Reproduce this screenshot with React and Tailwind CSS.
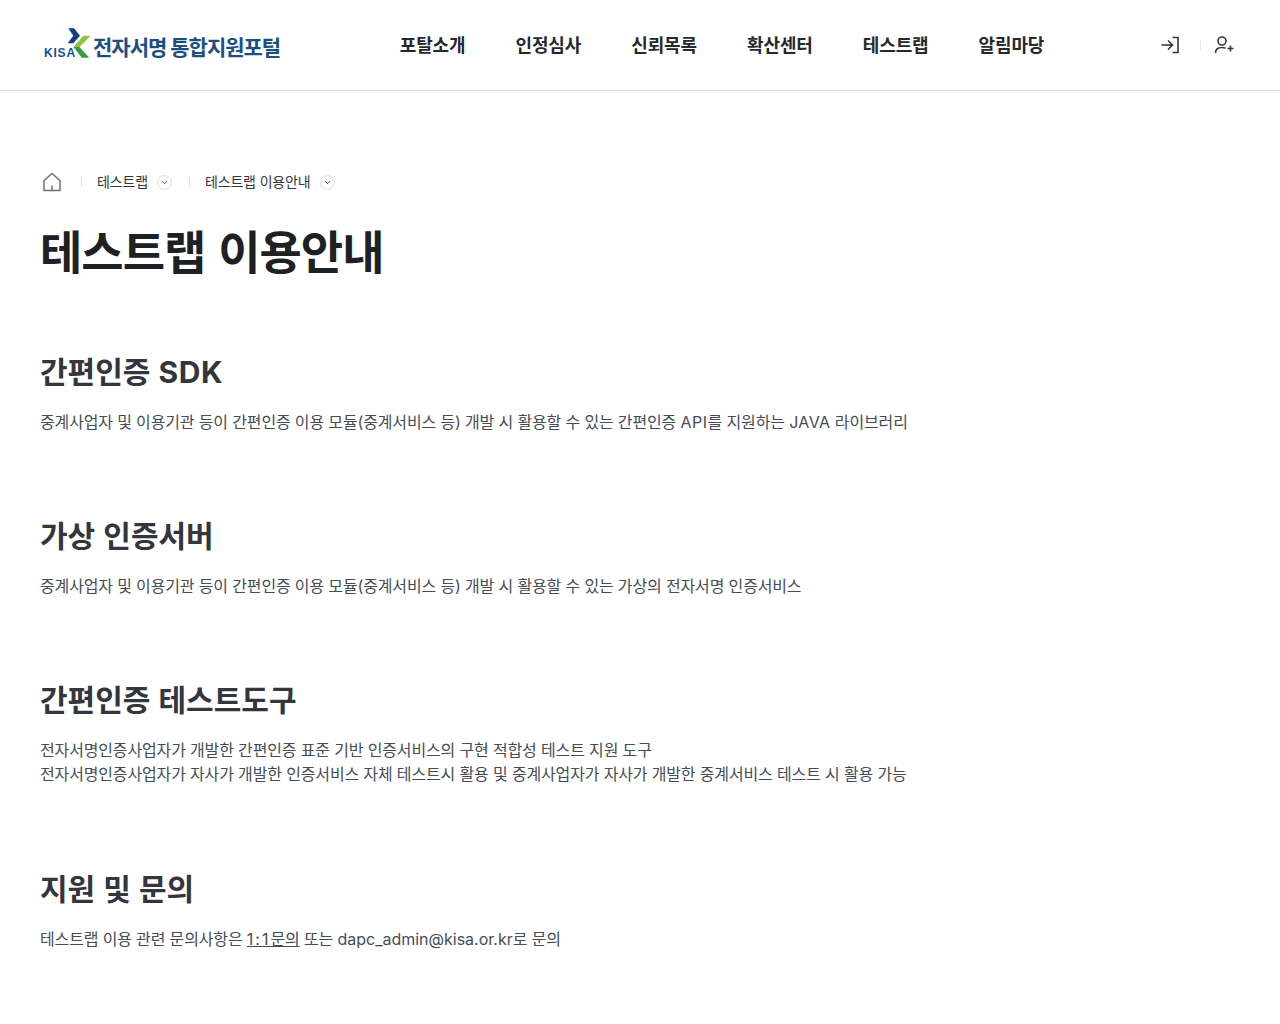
import React from 'react';
import { ChevronDown } from 'lucide-react';

const FONT = 'font-["Inter","Noto_Sans_CJK_KR",sans-serif]';

const MENUS = ['포탈소개', '인정심사', '신뢰목록', '확산센터', '테스트랩', '알림마당'];

function Logo() {
    return (
        <div className="flex items-center">
            <div className="relative h-[36px] w-[47px] shrink-0">
                <span className="absolute left-0 bottom-[6px] text-[12px] leading-none font-bold tracking-[0.8px] text-[#14508f] font-['Liberation_Sans',sans-serif]">KISA</span>
                <svg className="absolute left-[20px] top-[-1px]" width="28" height="32" viewBox="0 0 28 32">
                    <path d="M4.3 0.3 L10 0.3 L16 7.7 L9.3 15.3 L3.7 15.3 L9.3 7.7 Z" fill="#123f7f" />
                    <path d="M26.7 7.7 L19.3 7.7 L9.5 19 L15.5 19 Z" fill="#8cc63f" />
                    <path d="M9.5 19 L15.5 19 L25.3 29.7 L17.7 29.7 Z" fill="#3c9a43" />
                </svg>
            </div>
            <span className="ml-[2px] text-[21px] leading-none font-bold tracking-[-1px] text-[#1c4f80] whitespace-nowrap">전자서명 통합지원포털</span>
        </div>
    );
}

function Header() {
    return (
        <header className="flex h-[91px] items-center justify-between border-b border-[#dedfe2] pl-[44px] pr-[46px]">
            <div className="w-[238px] pt-[4px]"><Logo /></div>
            <nav className="flex gap-[50px] pt-[1px] pl-[2px]">
                {MENUS.map(m => (
                    <a key={m} className="text-[18px] leading-none font-bold tracking-[-0.12px] text-[#26282b] whitespace-nowrap">{m}</a>
                ))}
            </nav>
            <div className="flex items-center">
                <svg width="20" height="20" viewBox="0 0 20 20" fill="none" stroke="#33363d" strokeWidth="1.6">
                    <path d="M1.5 10 H12.5 M8 5.5 L12.5 10 L8 14.5" />
                    <path d="M12.5 2.5 H18 V17.5 H12.5" />
                </svg>
                <span className="ml-[20px] h-[10px] w-px bg-[#e6e7e9]" />
                <svg className="ml-[13px]" width="20" height="20" viewBox="0 0 20 20" fill="none" stroke="#33363d" strokeWidth="1.6">
                    <circle cx="8" cy="6" r="4" />
                    <path d="M1.5 18 C1.5 14 4 12.5 8 12.5 C9.5 12.5 10.5 12.7 11.5 13.2" />
                    <path d="M13.5 13.5 H19.5 M16.5 10.5 V16.5" />
                </svg>
            </div>
        </header>
    );
}

function Crumb({ children }) {
    return (
        <>
            <span className="ml-[17px] mr-[15px] h-[10px] w-px bg-[#dcdde0]" />
            <span className="text-[14px] leading-none tracking-[-0.15px] text-[#33363d] whitespace-nowrap">{children}</span>
            <span className="ml-[9px] flex h-[15px] w-[15px] items-center justify-center rounded-full border border-[#dcdde0]">
                <ChevronDown size={9} strokeWidth={2.5} color="#464c53" />
            </span>
        </>
    );
}

function Section({ title, className, children }) {
    return (
        <section className={className}>
            <h3 className="text-[30px] leading-[38px] font-bold [word-spacing:1px] text-[#33363d]">{title}</h3>
            <div className="mt-[19px] text-[16px] leading-[24px] tracking-[-0.15px] text-[#464c53]">{children}</div>
        </section>
    );
}

export default function App() {
    return (
        <div className={`min-h-[1024px] bg-white ${FONT}`}>
            <Header />
            <main className="px-[40px]">
                <div className="flex items-center pt-[81px] pl-[3px]">
                    <svg className="mr-[3px]" width="18" height="20" viewBox="0 0 18 20" fill="none" stroke="#6d7178" strokeWidth="1.5">
                        <path d="M1 8.5 L9 1.5 L17 8.5 V18.5 H1 Z" />
                        <path d="M9 13.5 V18.5" />
                    </svg>
                    <Crumb>테스트랩</Crumb>
                    <Crumb>테스트랩 이용안내</Crumb>
                </div>
                <h2 className="mt-[31px] text-[46px] leading-[58px] font-bold tracking-[-1px] [word-spacing:3px] text-[#1e2124]">테스트랩 이용안내</h2>
                <Section title={<>간편인증 <span className="tracking-[0.6px]">SDK</span></>} className="mt-[72px]">
                    중계사업자 및 이용기관 등이 간편인증 이용 모듈(중계서비스 등) 개발 시 활용할 수 있는 간편인증 <span className="tracking-[0.5px]">API</span>를 지원하는 <span className="tracking-[0.4px]">JAVA</span> 라이브러리
                </Section>
                <Section title="가상 인증서버" className="mt-[83px]">
                    중계사업자 및 이용기관 등이 간편인증 이용 모듈(중계서비스 등) 개발 시 활용할 수 있는 가상의 전자서명 인증서비스
                </Section>
                <Section title="간편인증 테스트도구" className="mt-[83px]">
                    전자서명인증사업자가 개발한 간편인증 표준 기반 인증서비스의 구현 적합성 테스트 지원 도구
                    <br />
                    전자서명인증사업자가 자사가 개발한 인증서비스 자체 테스트시 활용 및 중계사업자가 자사가 개발한 중계서비스 테스트 시 활용 가능
                </Section>
                <Section title="지원 및 문의" className="mt-[84px]">
                    테스트랩 이용 관련 문의사항은 <a className="underline"><span className="tracking-[2px]">1:1</span>문의</a> 또는 <span className="tracking-[0px]">dapc_admin@kisa.or.kr</span>로 문의
                </Section>
            </main>
        </div>
    );
}
